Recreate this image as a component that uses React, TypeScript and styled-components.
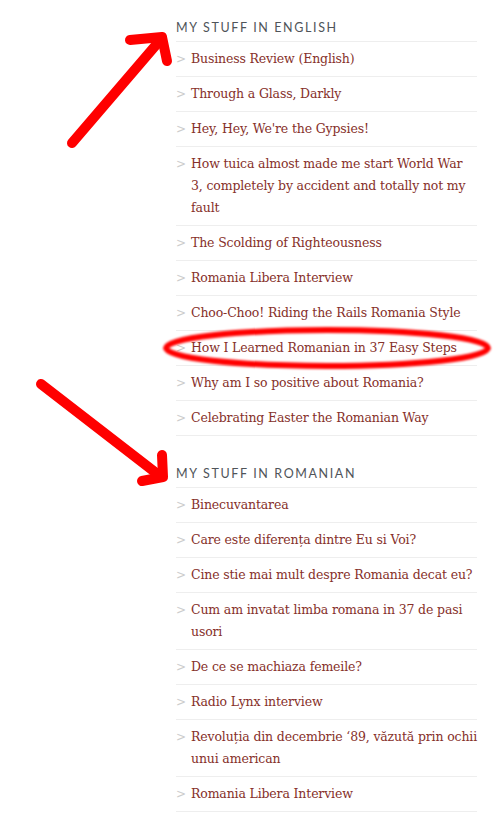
import React from "react";
import styled, { createGlobalStyle } from "styled-components";

const GlobalStyle = createGlobalStyle`
  html, body {
    margin: 0;
    padding: 0;
    background: #fff;
  }
`;

interface ISection {
  title: string;
  links: string[];
}

const sections: ISection[] = [
  {
    title: "My Stuff in English",
    links: [
      "Business Review (English)",
      "Through a Glass, Darkly",
      "Hey, Hey, We're the Gypsies!",
      "How tuica almost made me start World War 3, completely by accident and totally not my fault",
      "The Scolding of Righteousness",
      "Romania Libera Interview",
      "Choo-Choo! Riding the Rails Romania Style",
      "How I Learned Romanian in 37 Easy Steps",
      "Why am I so positive about Romania?",
      "Celebrating Easter the Romanian Way",
    ],
  },
  {
    title: "My Stuff in Romanian",
    links: [
      "Binecuvantarea",
      "Care este diferența dintre Eu si Voi?",
      "Cine stie mai mult despre Romania decat eu?",
      "Cum am invatat limba romana in 37 de pasi usori",
      "De ce se machiaza femeile?",
      "Radio Lynx interview",
      "Revoluția din decembrie ‘89, văzută prin ochii unui american",
      "Romania Libera Interview",
    ],
  },
];

const Page = styled.div`
  position: relative;
  height: 822px;
  overflow: hidden;
`;

const Sidebar = styled.aside`
  margin-left: 176px;
  width: 301px;
`;

const Widget = styled.section`
  & + & {
    margin-top: 10px;
  }
`;

const WidgetTitle = styled.h3`
  margin: 0;
  padding: 20px 0 5px;
  font-family: "Lato", "Open Sans", sans-serif;
  font-size: 12.5px;
  font-weight: 400;
  line-height: 16px;
  letter-spacing: 0.13em;
  text-transform: uppercase;
  color: #4f5459;
  border-bottom: 1px solid #eeeeee;
`;

const LinkList = styled.ul`
  list-style: none;
  margin: 0;
  padding: 0;
`;

const LinkItem = styled.li`
  display: flex;
  padding: 6px 0;
  border-bottom: 1px solid #eeeeee;
  line-height: 22px;
`;

const Bullet = styled.span`
  flex: 0 0 15px;
  font-family: "DejaVu Sans", sans-serif;
  font-size: 12px;
  color: #cccccc;
`;

const PostLink = styled.a`
  flex: 1;
  font-family: "DejaVu Serif", Georgia, serif;
  font-size: 12.5px;
  letter-spacing: -0.15px;
  color: #86302a;
  text-decoration: none;
`;

const Annotations = styled.svg`
  position: absolute;
  left: 0;
  top: 0;
  pointer-events: none;
`;

const App: React.FC = () => (
  <Page>
    <GlobalStyle />
    <Sidebar>
      {sections.map((s) => (
        <Widget key={s.title}>
          <WidgetTitle>{s.title}</WidgetTitle>
          <LinkList>
            {s.links.map((l) => (
              <LinkItem key={l}>
                <Bullet>&gt;</Bullet>
                <PostLink href="#">{l}</PostLink>
              </LinkItem>
            ))}
          </LinkList>
        </Widget>
      ))}
    </Sidebar>
    <Annotations width="496" height="822" viewBox="0 0 496 822">
      <defs>
        <filter id="soft" x="-10%" y="-50%" width="120%" height="200%">
          <feGaussianBlur stdDeviation="1.3" />
        </filter>
      </defs>
      <g stroke="#ff0000" strokeWidth="10" strokeLinecap="round" strokeLinejoin="round" fill="none">
        <path d="M72 143 L162 38" />
        <path d="M130 40 L162 37 L167 61" />
        <path d="M41 384 L160 476" />
        <path d="M162 455 L163 477 L142 481" />
      </g>
      <ellipse
        cx="327"
        cy="348"
        rx="161"
        ry="18"
        stroke="#ff0000"
        strokeWidth="6"
        fill="none"
        filter="url(#soft)"
      />
    </Annotations>
  </Page>
);

export default App;
